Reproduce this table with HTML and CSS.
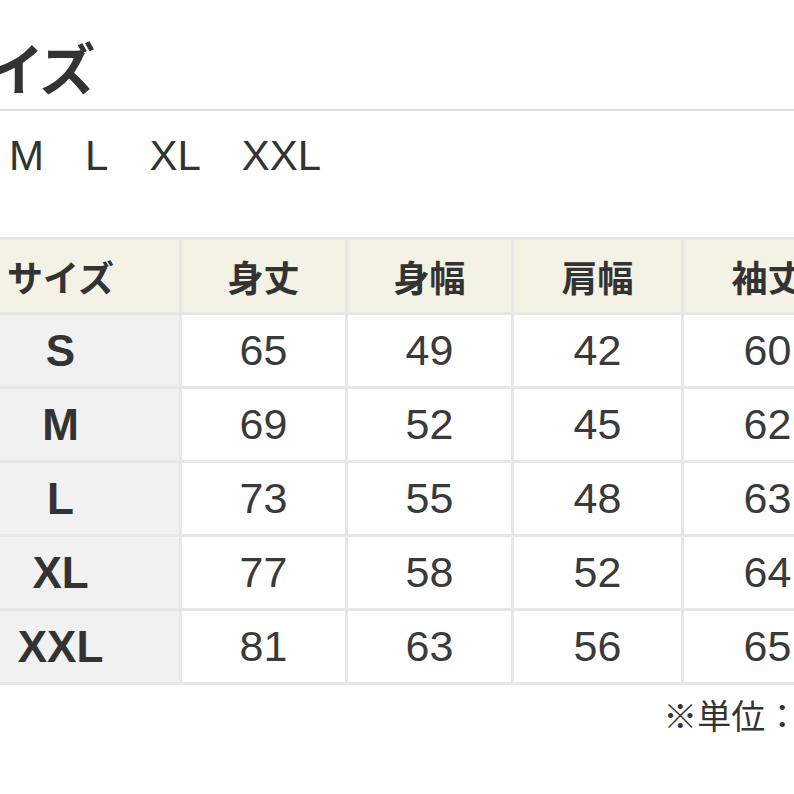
FILE: index.html
```html
<!DOCTYPE html>
<html lang="ja">
<head>
<meta charset="utf-8">
<title>サイズ</title>
<link rel="stylesheet" href="styles.css">
</head>
<body>
<div class="page">
  <h2 class="title">サイズ</h2>
  <div class="rule"></div>
  <ul class="sizes">
    <li>S</li><li>M</li><li>L</li><li>XL</li><li>XXL</li>
  </ul>
  <div class="chart">
    <table class="table">
      <thead>
        <tr>
          <th class="c1">サイズ</th>
          <th class="c2">身丈</th>
          <th class="c3">身幅</th>
          <th class="c4">肩幅</th>
          <th class="c5">袖丈</th>
        </tr>
      </thead>
      <tbody>
        <tr><th>S</th><td>65</td><td>49</td><td>42</td><td>60</td></tr>
        <tr><th>M</th><td>69</td><td>52</td><td>45</td><td>62</td></tr>
        <tr><th>L</th><td>73</td><td>55</td><td>48</td><td>63</td></tr>
        <tr><th>XL</th><td>77</td><td>58</td><td>52</td><td>64</td></tr>
        <tr><th>XXL</th><td>81</td><td>63</td><td>56</td><td>65</td></tr>
      </tbody>
    </table>
    <p class="note">※単位：cm</p>
  </div>
</div>
</body>
</html>
```
FILE: styles.css
```css
html, body {
  margin: 0;
  padding: 0;
  background: #ffffff;
  overflow: hidden;
}

body {
  color: #333333;
  font-family: "Liberation Sans", "Noto Sans CJK JP", sans-serif;
}

.page {
  margin-left: -61px;
  width: 1100px;
}

.title {
  margin: 0 0 0 -4px;
  padding-top: 38px;
  height: 72px;
  box-sizing: border-box;
  font-family: "Noto Sans CJK JP", sans-serif;
  font-weight: 700;
  font-size: 56px;
  line-height: 1;
  letter-spacing: -3px;
  color: #333333;
}

.rule {
  width: 1100px;
  height: 0;
  border-top: 2px solid #dedede;
  margin-top: 37px;
}

.sizes {
  list-style: none;
  margin: 24px 0 0 1px;
  padding: 0;
  display: flex;
  gap: 41px;
  font-family: "Liberation Sans", sans-serif;
  font-size: 42px;
  line-height: 1;
  color: #333333;
}

.chart {
  width: 912px;
  margin-top: 60px;
}

.table {
  border-collapse: separate;
  border-spacing: 3px;
  background: #e7e7e7;
  table-layout: fixed;
  width: 912px;
}

.table th,
.table td {
  padding: 0;
  text-align: center;
  vertical-align: middle;
}

.table thead th {
  height: 72px;
  background: #f3f2e4;
  font-family: "Noto Sans CJK JP", sans-serif;
  font-weight: 700;
  font-size: 36px;
  color: #333333;
}

.c1 { width: 237px; }
.c2 { width: 163px; }
.c3 { width: 163px; }
.c4 { width: 167px; }
.c5 { width: 167px; }

.table tbody th {
  height: 71px;
  background: #f1f1f1;
  font-family: "Liberation Sans", sans-serif;
  font-weight: 700;
  font-size: 44px;
  color: #333333;
}

.table tbody td {
  height: 71px;
  background: #ffffff;
  font-family: "Liberation Sans", sans-serif;
  font-weight: 400;
  font-size: 43px;
  color: #3a3a3a;
}

.note {
  margin: 10px 3px 0 0;
  text-align: right;
  font-family: "Noto Sans CJK JP", sans-serif;
  font-size: 34px;
  line-height: 1.2;
  color: #333333;
}
```
